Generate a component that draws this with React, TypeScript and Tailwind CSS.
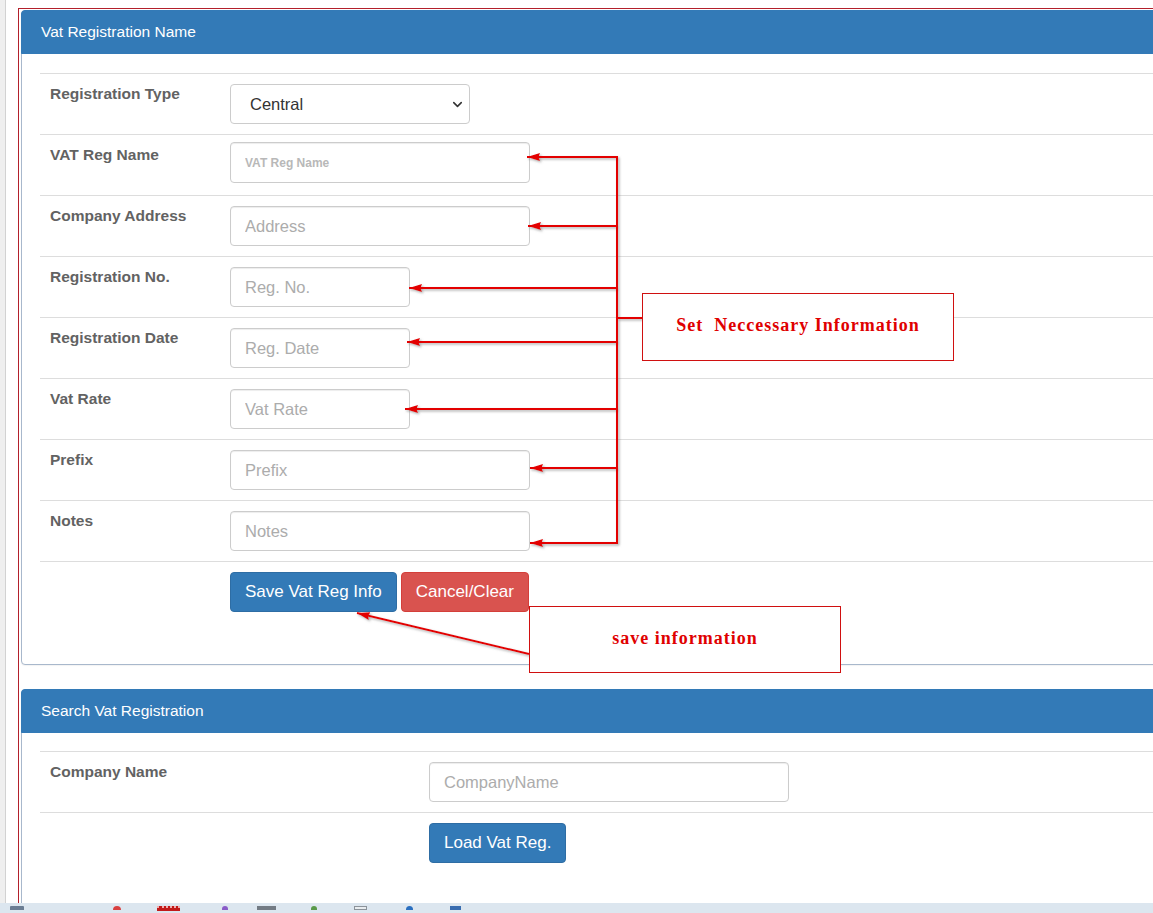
import { ChevronDown } from "lucide-react";
import type { ReactNode } from "react";

const sans = { fontFamily: '"Liberation Sans", Arial, sans-serif' };

function Row({
  label,
  labelW,
  children,
}: {
  label?: string;
  labelW: string;
  children: ReactNode;
}) {
  return (
    <div className="flex border-t border-[#dddddd] py-[10px]">
      <div
        className={`${labelW} shrink-0 pl-[10px] text-[15.5px] font-bold leading-[20px] text-[#626262]`}
      >
        {label}
      </div>
      <div className="flex gap-[4px]">{children}</div>
    </div>
  );
}

function Field({ placeholder, w, small }: { placeholder: string; w: string; small?: boolean }) {
  return (
    <input
      readOnly
      placeholder={placeholder}
      className={`${w} rounded-[4px] border border-[#cccccc] bg-white px-[14px] text-[#333333] shadow-[inset_0_1px_1px_rgba(0,0,0,0.075)] outline-none placeholder:text-[#acacac] ${
        small ? "-mt-[3px] mb-[2px] h-[41px] text-[12px] placeholder:font-bold placeholder:text-[#b8b8b8]" : "h-[40px] text-[16.5px]"
      }`}
      style={sans}
    />
  );
}

function Panel({ title, children, bodyPt }: { title: string; children: ReactNode; bodyPt: string }) {
  return (
    <section className="w-[1160px] rounded-[4px] border border-[#a8b8cc] bg-white shadow-[0_1px_1px_rgba(0,0,0,0.05)]">
      <div className="-mx-px -mt-px flex h-[44px] items-center rounded-t-[4px] border border-[#337ab7] bg-[#337ab7] px-[19px] text-[15.5px] text-white">
        {title}
      </div>
      <div className={`${bodyPt} pl-[18px]`}>{children}</div>
    </section>
  );
}

function Annotations() {
  const red = "#e30000";
  const arrows: [number, number, number, number][] = [
    [617, 157, 527, 157],
    [617, 226, 528, 226],
    [617, 288, 409, 288],
    [617, 342, 407, 342],
    [617, 409, 405, 409],
    [617, 468, 530, 468],
    [617, 543, 530, 543],
    [529, 654, 357, 613],
  ];
  return (
    <div className="pointer-events-none absolute inset-0">
      <svg width="1153" height="913" className="absolute left-0 top-0">
        <defs>
          <marker
            id="head"
            markerUnits="userSpaceOnUse"
            markerWidth="14"
            markerHeight="9"
            refX="13"
            refY="4.5"
            orient="auto"
          >
            <path d="M0 0.5 L13 4.5 L0 8.5 L1.5 4.5 Z" fill={red} />
          </marker>
          <filter id="shade" x="-10%" y="-10%" width="120%" height="120%">
            <feDropShadow dx="1.5" dy="1.5" stdDeviation="1" floodColor="#777777" floodOpacity="0.6" />
          </filter>
        </defs>
        <g filter="url(#shade)" stroke={red} strokeWidth="2" fill="none">
          <line x1="617" y1="156" x2="617" y2="544" />
          <line x1="617" y1="318" x2="642" y2="318" />
          {arrows.map(([x1, y1, x2, y2], i) => (
            <line key={i} x1={x1} y1={y1} x2={x2} y2={y2} markerEnd="url(#head)" />
          ))}
        </g>
      </svg>
      <div
        className="absolute left-[642px] top-[293px] flex h-[68px] w-[312px] items-center justify-center border border-[#d01010] bg-white pb-[3px] text-[18px] font-bold tracking-[1px] whitespace-pre text-[#e00000]"
        style={{ fontFamily: '"Liberation Serif", "Times New Roman", serif' }}
      >
        Set  Neccessary Information
      </div>
      <div
        className="absolute left-[529px] top-[606px] flex h-[67px] w-[312px] items-center justify-center border border-[#d01010] bg-white pb-[3px] text-[18px] font-bold tracking-[1px] text-[#e00000]"
        style={{ fontFamily: '"Liberation Serif", "Times New Roman", serif' }}
      >
        save information
      </div>
    </div>
  );
}

export default function App() {
  const labelW = "w-[190px]";
  return (
    <div className="relative flex h-[913px] w-[1153px] flex-col overflow-hidden bg-white" style={sans}>
      <div className="flex min-h-0 flex-1 overflow-hidden">
        <div className="w-[6px] shrink-0 border-r border-[#d2d2d2] bg-[#efefef]" />
        <div className="pl-[12px] pt-[8px]">
          <div className="h-[920px] w-[1200px] border border-[#b3202c] pl-[2px] pt-[1px]">
            <Panel title="Vat Registration Name" bodyPt="pt-[19px]">
              <Row label="Registration Type" labelW={labelW}>
                <div className="flex h-[40px] w-[240px] items-center justify-between rounded-[4px] border border-[#cccccc] bg-white pl-[19px] pr-[4px] text-[16.5px] text-[#333333]">
                  <span>Central</span>
                  <ChevronDown size={15} strokeWidth={2.5} color="#333333" />
                </div>
              </Row>
              <Row label="VAT Reg Name" labelW={labelW}>
                <Field placeholder="VAT Reg Name" w="w-[300px]" small />
              </Row>
              <Row label="Company Address" labelW={labelW}>
                <Field placeholder="Address" w="w-[300px]" />
              </Row>
              <Row label="Registration No." labelW={labelW}>
                <Field placeholder="Reg. No." w="w-[180px]" />
              </Row>
              <Row label="Registration Date" labelW={labelW}>
                <Field placeholder="Reg. Date" w="w-[180px]" />
              </Row>
              <Row label="Vat Rate" labelW={labelW}>
                <Field placeholder="Vat Rate" w="w-[180px]" />
              </Row>
              <Row label="Prefix" labelW={labelW}>
                <Field placeholder="Prefix" w="w-[300px]" />
              </Row>
              <Row label="Notes" labelW={labelW}>
                <Field placeholder="Notes" w="w-[300px]" />
              </Row>
              <div className="pb-[42px]">
                <Row labelW={labelW}>
                  <button className="h-[40px] rounded-[4px] border border-[#2e6da4] bg-[#337ab7] px-[14px] text-[17px] text-white">
                    Save Vat Reg Info
                  </button>
                  <button className="h-[40px] rounded-[4px] border border-[#d43f3a] bg-[#d9534f] px-[14px] text-[17px] text-white">
                    Cancel/Clear
                  </button>
                </Row>
              </div>
            </Panel>

            <div className="mt-[24px]">
              <Panel title="Search Vat Registration" bodyPt="pt-[18px]">
                <Row label="Company Name" labelW="w-[389px]">
                  <Field placeholder="CompanyName" w="w-[360px]" />
                </Row>
                <div className="pb-[50px]">
                  <Row labelW="w-[389px]">
                    <button className="h-[40px] rounded-[4px] border border-[#2e6da4] bg-[#337ab7] px-[14px] text-[17px] text-white">
                      Load Vat Reg.
                    </button>
                  </Row>
                </div>
              </Panel>
            </div>
          </div>
        </div>
      </div>

      <div className="flex h-[10px] shrink-0 items-start bg-[#dce6ef] pt-[3px]">
        <div className="ml-[10px] h-[4px] w-[14px] rounded-t-[1px] bg-[#6b7d93]" />
        <div className="ml-[89px] h-[4px] w-[8px] rounded-t-full bg-[#d84040]" />
        <div className="ml-[36px] h-[5px] w-[23px] border-t-2 border-dotted border-[#f0b0b0] bg-[#c21a1a]" />
        <div className="ml-[42px] h-[4px] w-[6px] rounded-t-full bg-[#8a5cc8]" />
        <div className="ml-[29px] h-[4px] w-[19px] bg-[#737b84]" />
        <div className="ml-[35px] h-[4px] w-[6px] rounded-t-full bg-[#5a9a4a]" />
        <div className="ml-[37px] h-[4px] w-[13px] border border-[#8c939a] bg-[#e8ecef]" />
        <div className="ml-[39px] h-[4px] w-[7px] rounded-t-full bg-[#2a6fc0]" />
        <div className="ml-[37px] h-[4px] w-[11px] bg-[#3a6db0]" />
      </div>

      <Annotations />
    </div>
  );
}
